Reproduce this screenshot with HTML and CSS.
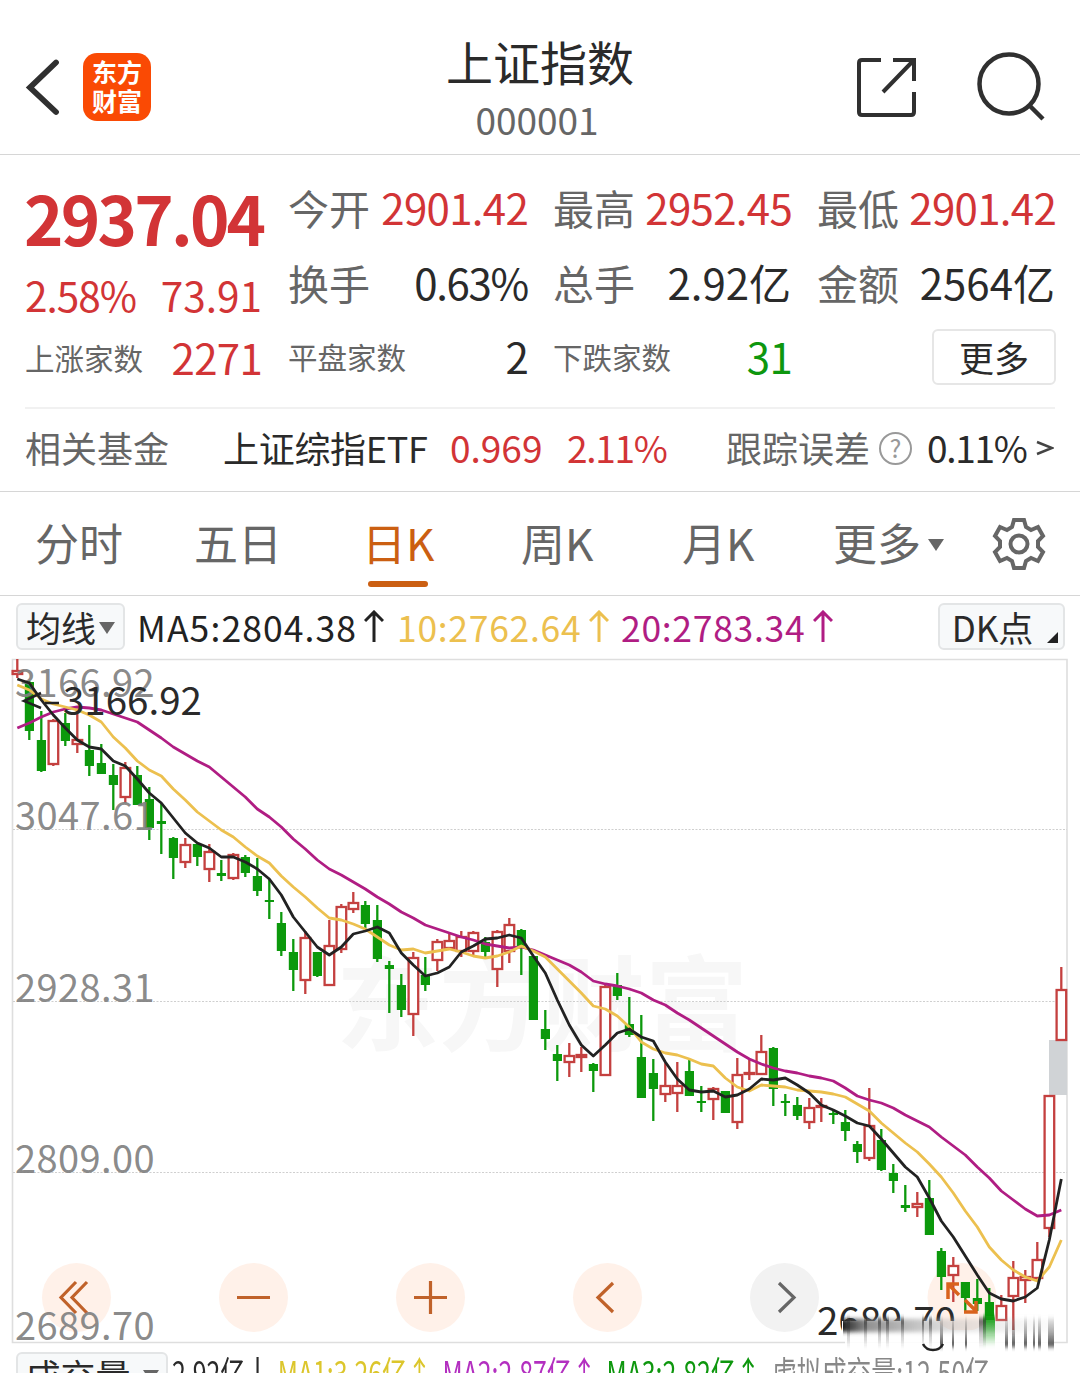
FILE: index.html
```html
<!DOCTYPE html>
<html lang="zh-CN">
<head>
    <meta charset="UTF-8">
    <title>上证指数 000001</title>
    <link rel="stylesheet" href="styles.css">
</head>

<body>
    <header class="header">
        <svg class="back" width="40" height="60" viewBox="0 0 40 60">
            <path d="M34 5.500 L8 30.500 L34 55" />
        </svg>
        <div class="logo"><span>东方</span><span>财富</span></div>
        <div class="title">
            <h1>上证指数</h1>
            <p>000001</p>
        </div>
        <svg class="share" width="62" height="62" viewBox="0 0 62 62">
            <path d="M26 4H7Q4 4 4 7V56Q4 59 7 59H56Q59 59 59 56V36M38 4H59V25M28 36L58 5" />
        </svg>
        <svg class="search" width="72" height="72" viewBox="0 0 72 72">
            <circle cx="34" cy="33" r="29.5" />
            <path d="M54 54L68 68" />
        </svg>
    </header>

    <section class="quote">
        <div class="price-col">
            <div class="price red">2937.04</div>
            <div class="change red"><span class="percent">2.58%</span><span>73.91</span></div>
            <div class="cell count"><label>上涨家数</label><b class="red">2271</b></div>
        </div>
        <div class="stats">
            <div class="cell"><label>今开</label><b class="red">2901.42</b></div>
            <div class="cell"><label>最高</label><b class="red">2952.45</b></div>
            <div class="cell"><label>最低</label><b class="red">2901.42</b></div>
            <div class="cell"><label>换手</label><b class="percent">0.63%</b></div>
            <div class="cell"><label>总手</label><b class="wide">2.92亿</b></div>
            <div class="cell"><label>金额</label><b class="wide">2564亿</b></div>
            <div class="cell count"><label>平盘家数</label><b>2</b></div>
            <div class="cell count"><label>下跌家数</label><b class="green">31</b></div>
            <div class="cell end"><button class="more">更多</button></div>
        </div>
    </section>

    <section class="fund">
        <span class="fund-label">相关基金</span>
        <span class="fund-name">上证综指ETF</span>
        <span class="fund-price red">0.969</span>
        <span class="fund-rate red">2.11%</span>
        <span class="fund-error">跟踪误差</span>
        <span class="help">?</span>
        <span class="fund-value">0.11%</span>
        <svg class="arrow" width="18" height="16" viewBox="0 0 18 16"><path d="M1 2L16 8L1 14" /></svg>
    </section>

    <nav class="tabs">
        <a>分时</a>
        <a>五日</a>
        <a class="active">日K</a>
        <a>周K</a>
        <a>月K</a>
        <a class="more-tab">更多<i class="caret"></i></a>
        <svg class="gear" width="56" height="56" viewBox="-28 -28 56 56">
            <path d="M-5 -24H5L7 -17L12 -14L19 -17L24 -8L19 -3V3L24 8L19 17L12 14L7 17L5 24H-5L-7 17L-12 14L-19 17L-24 8L-19 3V-3L-24 -8L-19 -17L-12 -14L-7 -17Z" />
            <circle r="8.5" />
        </svg>
    </nav>

    <div class="ma-bar">
        <button class="chip">均线<i class="caret"></i></button>
        <span class="ma ma5">MA5:2804.38</span>
        <svg class="up ma5" width="20" height="34" viewBox="0 0 20 34"><path d="M10 32V2M1 11L10 2L19 11" /></svg>
        <span class="ma ma10">10:2762.64</span>
        <svg class="up ma10" width="20" height="34" viewBox="0 0 20 34"><path d="M10 32V2M1 11L10 2L19 11" /></svg>
        <span class="ma ma20">20:2783.34</span>
        <svg class="up ma20" width="20" height="34" viewBox="0 0 20 34"><path d="M10 32V2M1 11L10 2L19 11" /></svg>
        <button class="chip dk">DK点<i class="corner"></i></button>
    </div>

    <svg class="chart" width="1080" height="698" viewBox="0 655 1080 698">
        <defs>
            <linearGradient id="fade" x1="0" y1="0" x2="0" y2="1">
                <stop offset="0" stop-color="#333" stop-opacity="0.75" />
                <stop offset="0.5" stop-color="#333" stop-opacity="0.3" />
                <stop offset="1" stop-color="#333" stop-opacity="0.05" />
            </linearGradient>
            <linearGradient id="fadeRight" x1="0" y1="0" x2="0" y2="1">
                <stop offset="0" stop-color="#444" stop-opacity="0.1" />
                <stop offset="0.5" stop-color="#444" stop-opacity="0.45" />
                <stop offset="1" stop-color="#333" stop-opacity="0.9" />
            </linearGradient>
            <linearGradient id="fadeGreen" x1="0" y1="0" x2="0" y2="1">
                <stop offset="0" stop-color="#0a9a0a" />
                <stop offset="1" stop-color="#0a9a0a" stop-opacity="0" />
            </linearGradient>
            <linearGradient id="fadeSide">
                <stop offset="0" stop-color="#222" />
                <stop offset="0.12" stop-color="#777" stop-opacity="0.8" />
                <stop offset="0.5" stop-color="#bbb" stop-opacity="0.5" />
                <stop offset="1" stop-color="#ddd" stop-opacity="0.1" />
            </linearGradient>
            <filter id="soft" x="-5%" y="-30%" width="110%" height="160%">
                <feGaussianBlur stdDeviation="0.7 2" />
            </filter>
            <clipPath id="lowClip">
                <path d="M800 1290H960V1321H842V1345H800Z" />
            </clipPath>
        </defs>

        <text class="watermark" x="336" y="1043">东方财富</text>
        <g class="frame">
            <path d="M12.500 659.500H1067V1342.500H12.500Z" />
            <path class="dots" d="M13 829.500H1067M13 1001.500H1067M13 1172.500H1067" />
        </g>

        <g class="circles">
            <circle cx="76.500" cy="1297.500" r="34.500" />
            <circle cx="253.500" cy="1297.500" r="34.500" />
            <circle cx="430.500" cy="1297.500" r="34.500" />
            <circle cx="607.500" cy="1297.500" r="34.500" />
            <circle class="off" cx="784.500" cy="1297.500" r="34.500" />
            <circle cx="962" cy="1297.500" r="34.500" />
        </g>
        <g class="tools">
            <path d="M76 1282L61 1297.500L76 1313M87 1282L72 1297.500L87 1313" />
            <path d="M237 1297.500H270" />
            <path d="M414 1297.500H447M430.500 1281V1314" />
            <path d="M613 1283L598 1297.500L613 1312" />
            <path class="off" d="M779 1283L794 1297.500L779 1312" />
        </g>

        <rect class="gap" x="1049" y="1040" width="18" height="55" />
        <g id="candles"></g>
        <g class="axis">
            <text x="15" y="697">3166.92</text>
            <text x="15" y="830">3047.61</text>
            <text x="15" y="1002">2928.31</text>
            <text x="15" y="1173">2809.00</text>
            <text x="15" y="1340">2689.70</text>
        </g>
        <path id="ma20" class="line ma20" />
        <path id="ma10" class="line ma10" />
        <path id="ma5" class="line ma5" />

        <path class="pointer" d="M41 693L24 701L41 708M45 703H59" />
        <text class="mark" x="63" y="715">3166.92</text>
        <path class="expand" d="M948 1299V1284H959M949 1285L959 1295M965 1300L976 1311M964 1312H976V1301" />

        <rect x="845" y="1330" width="209" height="18" fill="#fff" fill-opacity="0.9" />
        <text class="mark" x="817" y="1335" clip-path="url(#lowClip)">2689.70</text>
        <g id="smear" filter="url(#soft)"></g>
        <path class="hook" d="M923 1344Q926 1350 933 1350Q940 1350 943 1344" />
    </svg>

    <footer class="volume">
        <button class="chip">成交量<i class="caret"></i></button>
        <div class="volume-text">
            <span class="v0">2.92亿</span>
            <span class="v1">MA1:3.26亿↑</span>
            <span class="v2">MA2:2.87亿↑</span>
            <span class="v3">MA3:2.82亿↑</span>
            <span class="v4">虚拟成交量:12.50亿</span>
        </div>
    </footer>

    <script>
        // [up, high, low, bodyTop, bodyBottom]
        const candles = [
            [1, 659, 678, 670, 674], [0, 681, 740, 682, 731], [0, 711, 772, 740, 771], [1, 719, 766, 720, 764],
            [0, 713, 746, 723, 741], [1, 713, 753, 739, 744], [0, 725, 776, 750, 766], [0, 744, 774, 763, 774],
            [0, 764, 810, 775, 785], [1, 762, 803, 767, 797], [0, 766, 805, 775, 805], [0, 787, 840, 799, 828],
            [0, 803, 854, 821, 824], [0, 837, 879, 838, 858], [1, 838, 868, 844, 862], [0, 844, 866, 844, 857],
            [1, 844, 882, 851, 869], [0, 860, 881, 873, 876], [1, 853, 880, 854, 878], [0, 855, 877, 857, 873],
            [0, 858, 896, 876, 891], [0, 879, 919, 900, 902], [0, 912, 956, 923, 951], [0, 939, 991, 952, 970],
            [1, 931, 994, 937, 980], [0, 952, 977, 952, 976], [1, 920, 985, 945, 985], [1, 904, 953, 906, 949],
            [1, 892, 913, 902, 909], [0, 901, 928, 905, 924], [0, 905, 962, 920, 959], [0, 961, 1013, 965, 969],
            [0, 974, 1017, 985, 1010], [1, 952, 1036, 957, 1014], [0, 957, 991, 975, 985], [1, 939, 971, 941, 960],
            [1, 933, 949, 940, 948], [1, 931, 957, 936, 951], [1, 931, 957, 932, 951], [0, 937, 957, 942, 952],
            [1, 930, 987, 931, 969], [1, 918, 963, 924, 951], [0, 929, 975, 930, 948], [0, 956, 1020, 956, 1020],
            [0, 1010, 1050, 1029, 1039], [0, 1045, 1081, 1054, 1061], [1, 1043, 1077, 1055, 1062], [1, 1047, 1072, 1054, 1057],
            [0, 1063, 1092, 1064, 1071], [1, 985, 1076, 986, 1075], [0, 973, 1000, 985, 996], [0, 997, 1037, 1024, 1035],
            [0, 1015, 1098, 1057, 1098], [0, 1059, 1121, 1073, 1089], [1, 1063, 1102, 1085, 1094], [1, 1062, 1112, 1085, 1093],
            [0, 1060, 1096, 1071, 1096], [0, 1086, 1112, 1101, 1103], [1, 1087, 1120, 1088, 1099], [0, 1091, 1113, 1091, 1113],
            [1, 1058, 1129, 1074, 1122], [1, 1060, 1080, 1072, 1074], [1, 1035, 1074, 1051, 1074], [0, 1047, 1106, 1048, 1089],
            [0, 1094, 1116, 1101, 1103], [0, 1097, 1120, 1105, 1116], [1, 1098, 1129, 1107, 1122], [1, 1098, 1122, 1105, 1106],
            [0, 1110, 1124, 1113, 1115], [0, 1110, 1141, 1122, 1131], [0, 1141, 1163, 1144, 1152], [1, 1088, 1161, 1125, 1158],
            [0, 1129, 1171, 1140, 1170], [0, 1164, 1193, 1173, 1181], [0, 1185, 1212, 1205, 1208], [1, 1192, 1217, 1203, 1207],
            [0, 1180, 1235, 1198, 1235], [0, 1248, 1290, 1251, 1277], [1, 1257, 1302, 1265, 1275], [0, 1282, 1313, 1282, 1298],
            [0, 1279, 1311, 1298, 1304], [0, 1288, 1320, 1302, 1320], [1, 1295, 1320, 1305, 1320], [1, 1261, 1335, 1277, 1296],
            [1, 1270, 1303, 1276, 1280], [1, 1242, 1281, 1259, 1278], [1, 1095, 1237, 1095, 1228], [1, 967, 1040, 989, 1040]
        ];

        const averages = {
            ma5: [679, 683, 700, 715, 728, 740, 747, 749, 761, 766, 779, 793, 803, 818, 833, 843, 848, 857, 857, 862, 869, 879,
                895, 917, 932, 947, 955, 947, 934, 931, 927, 933, 953, 965, 976, 973, 967, 952, 946, 939, 938, 935, 938, 956,
                973, 1000, 1025, 1045, 1056, 1045, 1033, 1029, 1037, 1041, 1062, 1079, 1090, 1092, 1091, 1097, 1095, 1089,
                1079, 1080, 1078, 1085, 1093, 1105, 1110, 1116, 1123, 1126, 1139, 1153, 1167, 1177, 1198, 1221, 1237, 1256,
                1275, 1293, 1299, 1301, 1297, 1288, 1240, 1179],
            ma10: [685, 690, 699, 704, 707, 710, 715, 722, 737, 748, 761, 770, 776, 789, 800, 812, 821, 830, 837, 847, 856, 863,
                876, 887, 897, 908, 918, 920, 924, 929, 937, 945, 950, 949, 953, 951, 949, 952, 956, 958, 956, 952, 946, 951,
                957, 969, 981, 993, 1006, 1009, 1016, 1027, 1042, 1049, 1053, 1055, 1059, 1064, 1066, 1078, 1087, 1091, 1085,
                1086, 1087, 1090, 1091, 1092, 1094, 1097, 1104, 1111, 1123, 1133, 1143, 1152, 1164, 1177, 1193, 1211, 1227,
                1247, 1260, 1270, 1277, 1281, 1267, 1240],
            ma20: [728, 723, 717, 712, 709, 707, 708, 710, 714, 718, 722, 730, 738, 747, 754, 761, 767, 777, 787, 797, 809, 817,
                827, 839, 849, 860, 869, 875, 882, 889, 897, 904, 912, 918, 925, 929, 933, 937, 940, 944, 946, 948, 947, 950,
                955, 960, 965, 972, 981, 984, 986, 989, 993, 1000, 1005, 1013, 1020, 1028, 1036, 1044, 1052, 1059, 1064, 1068,
                1071, 1073, 1076, 1078, 1081, 1088, 1096, 1100, 1103, 1108, 1115, 1121, 1127, 1137, 1146, 1155, 1167, 1178,
                1191, 1200, 1209, 1216, 1215, 1210]
        };

        const xAt = (i) => 17.3 + i * 12;

        function drawCandles() {
            let html = "";
            candles.forEach(([up, high, low, top, bottom], i) => {
                const x = xAt(i);
                if (up) {
                    html += `<path class="up-candle" d="M${x} ${high}V${top}M${x} ${bottom}V${low}"/>`;
                    html += `<rect class="up-candle" x="${x - 4.7}" y="${top + 1}" width="9.6" height="${Math.max(bottom - top - 1, 1)}"/>`;
                } else {
                    html += `<path class="down-candle" d="M${x} ${high}V${low}"/>`;
                    html += `<rect class="down-body" x="${x - 4.5}" y="${top}" width="9.2" height="${bottom - top}"/>`;
                }
            });
            document.getElementById("candles").innerHTML = html;
        }

        function drawLine(id) {
            const points = averages[id].map((y, i) => `${xAt(i)} ${y}`);
            document.getElementById(id).setAttribute("d", "M" + points.join("L"));
        }

        // smeared strip under the lowest price
        function drawSmear() {
            const left = [[847, 3], [864, 3], [878, 3], [886, 3], [901, 3], [922, 2], [929, 3], [979, 7]];
            const right = [[940, 3], [952, 2], [965, 2], [1005, 3], [1012, 3], [1024, 3], [1033, 2], [1038, 3], [1048, 6]];
            let html = `<rect x="843" y="1319" width="211" height="13" fill="url(#fadeSide)"/>`;
            html += `<rect x="983" y="1316" width="12" height="30" fill="url(#fadeGreen)"/>`;
            left.forEach(([x, w]) => {
                html += `<rect x="${x}" y="1318" width="${w}" height="28" fill="url(#fade)"/>`;
            });
            right.forEach(([x, w]) => {
                html += `<rect x="${x}" y="1318" width="${w}" height="29" fill="url(#fadeRight)"/>`;
            });
            document.getElementById("smear").innerHTML = html;
        }

        drawCandles();
        drawLine("ma20");
        drawLine("ma10");
        drawLine("ma5");
        drawSmear();
    </script>
</body>

</html>
```
FILE: styles.css
```css
* {
    box-sizing: border-box;
}

body {
    margin: 0;
    width: 1080px;
    height: 1373px;
    overflow: hidden;
    background: #fff;
    color: #2a2a2a;
    font-family: "Noto Sans CJK SC", sans-serif;
    font-size: 42px;
}

svg {
    display: block;
    fill: none;
    flex: none;
}

button {
    font-family: inherit;
    color: #2a2a2a;
    padding: 0;
}

.red {
    color: #d23436;
}

.green {
    color: #0e970e;
}

/* header */
.header {
    display: flex;
    align-items: flex-start;
    height: 155px;
    border-bottom: 1px solid #d6d6d6;
}

.back {
    margin: 57px 0 0 22px;
    stroke: #303030;
    stroke-width: 5.8;
    stroke-linecap: round;
}

.logo {
    width: 68px;
    height: 68px;
    margin: 53px 0 0 21px;
    padding-top: 4px;
    border-radius: 14px;
    background: #fa4a04;
    color: #fff;
    font-size: 25px;
    font-weight: bold;
    line-height: 29px;
    text-align: center;
}

.logo span {
    display: block;
}

.title {
    flex: 1;
    padding: 26px 0 0 1px;
    text-align: center;
}

.title h1 {
    margin: 0 0 0 73px;
    font-size: 47px;
    font-weight: normal;
    line-height: 70px;
}

.title p {
    margin: 0 0 0 67px;
    font-size: 37px;
    line-height: 46px;
    color: #666;
}

.share {
    margin: 56px 0 0;
    stroke: #303030;
    stroke-width: 4;
}

.search {
    margin: 51px 33px 0 58px;
    stroke: #303030;
    stroke-width: 4.5;
}

/* price block */
.quote {
    display: flex;
    gap: 26px;
    height: 252px;
    padding: 15px 25px 0;
}

.price-col {
    width: 237px;
}

.price {
    height: 93px;
    margin-left: -1px;
    font-size: 67px;
    font-weight: bold;
    line-height: 93px;
    letter-spacing: -2.8px;
    white-space: nowrap;
}

.change {
    display: flex;
    justify-content: space-between;
    height: 63px;
    font-size: 40.5px;
    line-height: 63px;
}

.percent {
    letter-spacing: -1px;
}

.price-col .cell {
    height: 62px;
}

.stats {
    display: grid;
    grid-template-columns: 240px 239px 239px;
    grid-template-rows: 74.5px 74.5px 74.5px;
    column-gap: 25px;
}

.cell {
    display: flex;
    align-items: center;
    justify-content: space-between;
    line-height: 60px;
    white-space: nowrap;
}

.cell label {
    font-size: 41px;
    color: #666;
}

.count label {
    font-size: 29.5px;
}

.cell b {
    font-weight: normal;
    letter-spacing: -0.7px;
}

.cell .percent {
    letter-spacing: -1.3px;
}

.cell .wide {
    letter-spacing: 0;
    margin-right: 1px;
}

.end {
    justify-content: flex-end;
}

.more {
    width: 124px;
    height: 56px;
    margin-top: 2px;
    border: 2px solid #e6e6e6;
    border-radius: 6px;
    background: #fff;
    font-size: 35px;
    line-height: 46px;
}

/* related fund */
.fund {
    display: flex;
    align-items: center;
    height: 85px;
    padding: 0 25px 4px;
    font-size: 36px;
    position: relative;
    border-bottom: 1px solid #d6d6d6;
    line-height: 50px;
    white-space: nowrap;
}

.fund::before {
    content: "";
    position: absolute;
    left: 25px;
    right: 25px;
    top: 0;
    height: 2px;
    background: #f1f1f1;
}

.fund-label {
    width: 198px;
    color: #666;
}

.fund-name {
    width: 227px;
    letter-spacing: -0.3px;
}

.fund-price {
    width: 117px;
    font-size: 37px;
}

.fund-rate {
    width: 159px;
    font-size: 37px;
    letter-spacing: -1.3px;
}

.fund-error {
    width: 153px;
    color: #666;
}

.help {
    width: 33px;
    height: 33px;
    margin-top: 3px;
    border: 2.5px solid #999;
    border-radius: 50%;
    color: #999;
    font-size: 25px;
    line-height: 27px;
    text-align: center;
}

.fund-value {
    width: 109px;
    margin-left: 15px;
    font-size: 37px;
    letter-spacing: -1.3px;
}

.arrow {
    margin-top: 2px;
    stroke: #444;
    stroke-width: 2.5;
}

/* period tabs */
.tabs {
    display: flex;
    height: 104px;
    padding-left: 35px;
    border-bottom: 1px solid #d6d6d6;
    color: #666;
    font-size: 44px;
    line-height: 101px;
    white-space: nowrap;
}

.tabs a {
    width: 161px;
}

.tabs a:nth-child(1) {
    width: 159px;
}

.tabs a:nth-child(2) {
    width: 168px;
}

.tabs a:nth-child(3) {
    width: 159px;
}

.tabs a.active {
    position: relative;
    color: #cb5f12;
}

.active::after {
    content: "";
    position: absolute;
    left: 6px;
    bottom: 8px;
    width: 60px;
    height: 6px;
    border-radius: 3px;
    background: #cb5f12;
}

.tabs a:nth-child(5) {
    width: 151px;
}

.tabs .more-tab {
    width: 158px;
}

.caret {
    display: inline-block;
    border: 8px solid transparent;
    border-top: 12px solid #666;
    border-bottom: 0;
    vertical-align: 10px;
    margin-left: 7px;
}

.gear {
    margin-top: 24px;
    stroke: #666;
    stroke-width: 4;
}

/* moving average bar */
.ma-bar {
    display: flex;
    align-items: center;
    height: 59px;
    padding: 2px 15px 0 16px;
    font-size: 35.5px;
    white-space: nowrap;
}

.chip {
    width: 109px;
    height: 47px;
    border: 2px solid #e3e5e6;
    border-radius: 6px;
    background: #f7f9fa;
    font-size: 35px;
    line-height: 38px;
    white-space: nowrap;
    align-self: flex-start;
    margin-top: 5px;
}

.chip .caret {
    margin-left: 3px;
    vertical-align: 8px;
}

.ma {
    line-height: 48px;
    letter-spacing: 0.7px;
}

span.ma5 {
    width: 227px;
    margin-left: 12px;
    letter-spacing: 1.1px;
}

span.ma10 {
    width: 192px;
    margin-left: 13px;
}

span.ma20 {
    width: 192px;
    margin-left: 12px;
}

.ma5 {
    color: #222;
    stroke: #222;
}

.ma10 {
    color: #ecc04f;
    stroke: #ecc04f;
}

.ma20 {
    color: #b01d83;
    stroke: #b01d83;
}

span.ma {
    stroke: none;
}

.up {
    stroke-width: 3;
}

.dk {
    position: relative;
    width: 127px;
    margin-left: auto;
    padding: 0 18px 0 0;
}

.corner {
    position: absolute;
    right: 5px;
    bottom: 5px;
    border-left: 11px solid transparent;
    border-bottom: 11px solid #222;
}

/* candle chart */
.frame path {
    stroke: #dedede;
    stroke-width: 1.6;
}

.frame .dots {
    stroke: #cfcfcf;
    stroke-width: 1;
    stroke-dasharray: 2 1.5;
}

.watermark {
    fill: #f7f7f7;
    font-size: 103px;
    font-weight: bold;
}

.axis text {
    fill: #808080;
    fill-opacity: 0.92;
    font-size: 38px;
    letter-spacing: 0.4px;
}

.mark {
    fill: #2a2a2a;
    font-size: 38.5px;
}

.gap {
    fill: #d0d3d6;
}

.up-candle {
    fill: none;
    stroke: #c4403f;
    stroke-width: 2.3;
}

rect.up-candle {
    fill: #fff;
}

.down-candle {
    stroke: #0c990c;
    stroke-width: 2.3;
}

.down-body {
    fill: #0c990c;
}

.line {
    stroke-width: 2.8;
    stroke-linejoin: round;
}

.pointer,
.hook {
    stroke: #222;
    stroke-width: 2.5;
}

.circles circle {
    fill: #fff1e9;
}

.circles .off {
    fill: #f2f2f2;
}

.tools path {
    stroke: #c0622a;
    stroke-width: 3.2;
}

.tools .off {
    stroke: #666;
}

.expand {
    stroke: #d9621c;
    stroke-width: 3.5;
}

/* volume row, cut by the bottom of the screen */
.volume {
    display: flex;
    align-items: flex-start;
    padding-left: 16px;
    height: 20px;
}

.volume .chip {
    width: 152px;
    height: 46px;
    margin-top: -1px;
    flex: none;
    line-height: 32px;
}

.volume .caret {
    margin-left: 12px;
}

.volume-text {
    display: flex;
    font-size: 35px;
    line-height: 50px;
    margin: -6px 0 0 4px;
    white-space: nowrap;
    transform: scaleX(0.71);
    transform-origin: left top;
}

.v0 {
    width: 122px;
    height: 37px;
    margin-top: 10px;
    border-right: 3px solid #2a2a2a;
    line-height: 30px;
}

.v1 {
    width: 232px;
    margin-left: 27px;
    color: #dcc62c;
}

.v2 {
    width: 231px;
    color: #b32fc0;
}

.v3 {
    width: 233px;
    color: #0e970e;
}

.v4 {
    color: #888;
}
```
